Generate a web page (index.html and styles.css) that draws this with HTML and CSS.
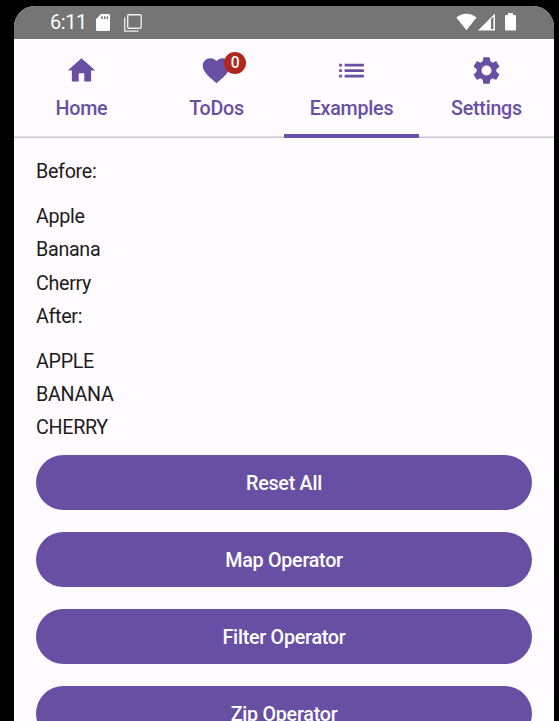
FILE: index.html
```html
<!DOCTYPE html>
<html lang="en">
<head>
<meta charset="utf-8">
<title>Examples</title>
<link rel="stylesheet" href="styles.css">
</head>
<body>
<div class="phone">
  <header class="status">
    <span class="clock">6:11</span>
    <svg class="sd" width="14" height="17" viewBox="0 0 14 17"><path fill="#fff" fill-rule="evenodd" d="M5 0H12.5Q14 0 14 1.5V15.5Q14 17 12.5 17H1.5Q0 17 0 15.5V5.3ZM5.2 2.2V5H6.7V2.2ZM7.9 2.2V5H9.4V2.2ZM10.6 2.2V5H12V2.2Z"/></svg>
    <svg class="copies" width="18" height="18" viewBox="0 0 18 18" fill="none" stroke="#eee"><rect x="3.7" y=".7" width="13.5" height="13.5" rx="1" stroke-width="1.4"/><path stroke-width="1.3" d="M.7 3.5V17.2H14.5"/></svg>
    <div class="signals">
      <svg width="21" height="18" viewBox="0 0 21 18"><path fill="#fff" d="M10.4 17.2.3 4.5Q4.8.7 10.4.7T20.5 4.5Z"/></svg>
      <svg class="cell" width="17" height="18" viewBox="0 0 17 18"><path fill="#fff" fill-rule="evenodd" d="M17 .5V17.5H0ZM13 6V16H15.4V3.7Z"/></svg>
      <svg class="battery" width="11" height="18" viewBox="0 0 11 18"><path fill="#fff" d="M3 0H8V2H10Q11 2 11 3V16.5Q11 17.5 10 17.5H1Q0 17.5 0 16.5V3Q0 2 1 2H3Z"/></svg>
    </div>
  </header>
  <nav class="tabs">
    <a class="tab"><span class="icon"><svg viewBox="0 0 24 24"><path d="M10 20v-6h4v6h5v-8h3L12 3 2 12h3v8z"/></svg></span><span>Home</span></a>
    <a class="tab"><span class="icon"><svg viewBox="0 0 24 24"><path d="M12 21.35l-1.45-1.32C5.4 15.36 2 12.28 2 8.5 2 5.42 4.42 3 7.5 3c1.74 0 3.41.81 4.5 2.09C13.09 3.81 14.76 3 16.5 3 19.58 3 22 5.42 22 8.5c0 3.78-3.4 6.86-8.55 11.54L12 21.35z"/></svg><b class="badge">0</b></span><span>ToDos</span></a>
    <a class="tab active"><span class="icon"><svg viewBox="0 0 24 24"><path d="M3 13h2v-2H3v2zm0 4h2v-2H3v2zm0-8h2V7H3v2zm4 4h14v-2H7v2zm0 4h14v-2H7v2zM7 7v2h14V7H7z"/></svg></span><span>Examples</span></a>
    <a class="tab"><span class="icon"><svg viewBox="0 0 24 24"><path d="M19.14 12.94c.04-.3.06-.61.06-.94 0-.32-.02-.64-.07-.94l2.03-1.58c.18-.14.23-.41.12-.61l-1.92-3.32c-.12-.22-.37-.29-.59-.22l-2.39.96c-.5-.38-1.03-.7-1.62-.94l-.36-2.54c-.04-.24-.24-.41-.48-.41h-3.84c-.24 0-.43.17-.47.41l-.36 2.54c-.59.24-1.13.57-1.62.94l-2.39-.96c-.22-.08-.47 0-.59.22L2.74 8.87c-.12.21-.08.47.12.61l2.03 1.58c-.05.3-.09.63-.09.94s.02.64.07.94l-2.03 1.58c-.18.14-.23.41-.12.61l1.92 3.32c.12.22.37.29.59.22l2.39-.96c.5.38 1.03.7 1.62.94l.36 2.54c.05.24.24.41.48.41h3.84c.24 0 .44-.17.47-.41l.36-2.54c.59-.24 1.13-.56 1.62-.94l2.39.96c.22.08.47 0 .59-.22l1.92-3.32c.12-.22.07-.47-.12-.61l-2.01-1.58zM12 15.6c-1.98 0-3.6-1.62-3.6-3.6s1.62-3.6 3.6-3.6 3.6 1.62 3.6 3.6-1.62 3.6-3.6 3.6z"/></svg></span><span>Settings</span></a>
  </nav>
  <main class="content">
    <p class="heading">Before:</p>
    <p>Apple</p>
    <p>Banana</p>
    <p>Cherry</p>
    <p class="heading">After:</p>
    <p>APPLE</p>
    <p>BANANA</p>
    <p>CHERRY</p>
    <div class="actions">
      <button>Reset All</button>
      <button>Map Operator</button>
      <button>Filter Operator</button>
      <button>Zip Operator</button>
    </div>
  </main>
</div>
</body>
</html>
```
FILE: styles.css
```css
* { box-sizing: border-box; }
body {
  margin: 0;
  height: 721px;
  overflow: hidden;
  padding: 6px 5px 0 14px;
  background: #000;
  color: #1d1b20;
  font: 19.7px Roboto, sans-serif;
  letter-spacing: -.3px;
}
.phone {
  height: 715px;
  overflow: hidden;
  background: #fffbfe;
  border-radius: 21px 21px 0 0;
}
.status {
  display: flex;
  height: 33px;
  padding: 0 38px 0 36px;
  background: #757575;
  color: #fff;
}
.clock { width: 46px; line-height: 32px; font-size: 20px; letter-spacing: -.4px; }
.sd { margin-top: 8px; }
.copies { margin: 8px 0 0 14px; }
.signals { display: flex; margin: 7px 0 0 auto; }
.signals svg:first-child { margin-left: -1px; }
.cell { margin-left: 1px; }
.battery { margin-left: 10px; }
.tabs {
  display: grid;
  grid-template-columns: repeat(4, 1fr);
  height: 99px;
  box-shadow: inset 0 -1.4px #cac4d0;
}
.tab {
  display: flex;
  flex-direction: column;
  align-items: center;
  padding-top: 15px;
  color: #6750a4;
  font-weight: 500;
  line-height: 27.5px;
  letter-spacing: -.25px;
}
.active { border-bottom: 4px solid #6750a4; }
.icon { position: relative; width: 33px; height: 33px; margin-bottom: 8px; }
.icon svg { display: block; width: 33px; height: 33px; fill: currentColor; }
.badge {
  position: absolute;
  left: 24px;
  top: -2.5px;
  width: 22px;
  height: 22px;
  border-radius: 50%;
  background: #b3261e;
  color: #fff;
  font-size: 15.6px;
  font-weight: 500;
  line-height: 22px;
  text-align: center;
}
.content { padding: 17.4px 22px 0; }
p { margin: 0; height: 33.45px; line-height: 33px; }
.heading { margin-bottom: 11px; }
.actions { display: grid; gap: 22px; padding-top: 10.5px; }
button {
  height: 55px;
  border: 0;
  border-radius: 28px;
  background: #6750a4;
  color: #fff;
  font: 500 19.7px/55px Roboto, sans-serif;
  letter-spacing: -.25px;
  padding: 1px 0 0;
}
```
